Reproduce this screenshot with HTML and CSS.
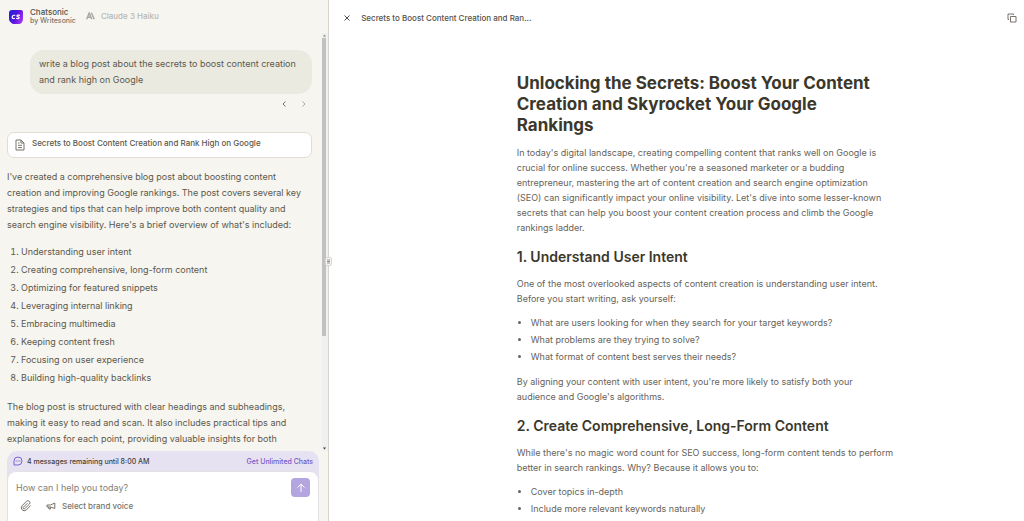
FILE: index.html
```
<!DOCTYPE html>
<html lang="en">
<head>
<meta charset="utf-8">
<meta name="viewport" content="width=device-width, initial-scale=1">
<title>Chatsonic</title>
<link rel="stylesheet" href="styles.css">
</head>
<body>
<div class="app">
  <aside class="chat">
    <header class="chat-header">
      <svg class="logo" viewBox="0 0 16 16" role="img" aria-label="Chatsonic logo">
        <defs>
          <linearGradient id="brand" x1="0" y1="0.2" x2="1" y2="0.7">
            <stop offset="0" stop-color="#2420d8"/><stop offset="0.55" stop-color="#5c16e0"/><stop offset="1" stop-color="#a838f0"/>
          </linearGradient>
        </defs>
        <path d="M4 1H13Q15 1 15 3V10Q15 12.500 13.500 14Q12.500 15 11 15H5.500Q4.500 15 3.500 14L2 12.500Q1 11.500 1 10V4Q1 1 4 1Z" fill="url(#brand)"/>
        <path d="M7.300 6.500Q4.500 5.600 4.200 8Q4.100 10.100 6.900 9.300M11.900 6.400Q9 5.700 8.900 7Q9 7.900 10.300 7.900Q11.600 8.400 10.900 9.200Q10 9.900 8.100 9.300" fill="none" stroke="#fff" stroke-width="1.200"/>
      </svg>
      <div class="brand">
        <span class="brand-name">Chatsonic</span>
        <span class="brand-by">by Writesonic</span>
      </div>
      <div class="model">
        <svg class="model-icon" viewBox="0 0 10 8" aria-hidden="true"><path d="M0.700 7.300L3.200 1L5.700 7.300M1.700 5.300H4.800M5.300 0.700L8.300 7.300" fill="none" stroke="currentColor" stroke-width="1.500"/></svg>
        <span>Claude 3 Haiku</span>
      </div>
    </header>

    <div class="thread-wrap">
      <main class="thread">
        <p class="prompt">write a blog post about the secrets to boost content creation and rank high on Google</p>
        <nav class="pager" aria-label="Prompt versions">
          <button class="icon-button" aria-label="Previous"><svg class="chevron" viewBox="0 0 6 8"><path d="M4.500 1.500L2 4L4.500 6.500"/></svg></button>
          <button class="icon-button next" aria-label="Next"><svg class="chevron" viewBox="0 0 6 8"><path d="M1.500 1.500L4 4L1.500 6.500"/></svg></button>
        </nav>
        <button class="artifact">
          <svg class="artifact-icon" viewBox="0 0 10 12" aria-hidden="true"><path d="M1 1H6L9 4V11H1ZM6 1V4H9M3 4H4.500M3 6.300H7M3 8.600H7"/></svg>
          <span>Secrets to Boost Content Creation and Rank High on Google</span>
        </button>
        <div class="answer">
          <p>I've created a comprehensive blog post about boosting content creation and improving Google rankings. The post covers several key strategies and tips that can help improve both content quality and search engine visibility. Here's a brief overview of what's included:</p>
          <ol>
            <li>Understanding user intent</li>
            <li>Creating comprehensive, long-form content</li>
            <li>Optimizing for featured snippets</li>
            <li>Leveraging internal linking</li>
            <li>Embracing multimedia</li>
            <li>Keeping content fresh</li>
            <li>Focusing on user experience</li>
            <li>Building high-quality backlinks</li>
          </ol>
          <p>The blog post is structured with clear headings and subheadings, making it easy to read and scan. It also includes practical tips and explanations for each point, providing valuable insights for both beginners and experienced content creators.</p>
        </div>
      </main>
      <div class="scrollbar" aria-hidden="true">
        <svg class="arrow" viewBox="0 0 5 5"><path d="M1 3.500L2.500 1.500L4 3.500Z"/></svg>
        <div class="track"><div class="thumb"></div></div>
        <svg class="arrow dark" viewBox="0 0 5 5"><path d="M1 1.500L2.500 3.500L4 1.500Z"/></svg>
      </div>
    </div>

    <footer class="composer">
      <div class="quota">
        <svg class="quota-icon" viewBox="0 0 10 10" aria-hidden="true"><path d="M1 9V5A4 4 0 1 1 5 9Z" fill="none" stroke="currentColor"/><path d="M2.700 5H3.700M4.500 5H5.500M6.300 5H7.300" stroke="currentColor" stroke-width="1.100"/></svg>
        <span>4 messages remaining until 8:00 AM</span>
        <a class="upgrade" href="#">Get Unlimited Chats</a>
      </div>
      <form class="entry">
        <div class="entry-row">
          <input class="message" type="text" placeholder="How can I help you today?" aria-label="Message">
          <button class="send" type="button" aria-label="Send"><svg viewBox="0 0 10 10"><path d="M5 9V1M1.500 4.500L5 1L8.500 4.500"/></svg></button>
        </div>
        <div class="tools">
          <button class="icon-button" type="button" aria-label="Attach file"><svg class="clip" viewBox="0 0 24 24"><path d="M21.400 11.100L12.200 20.200A6 6 0 0 1 3.800 11.800L13 2.600A4 4 0 0 1 18.700 8.300L9.400 17.400A2 2 0 0 1 6.600 14.600L15 6.200"/></svg></button>
          <button class="voice" type="button"><svg class="horn" viewBox="0 0 10 8" aria-hidden="true"><path d="M1 3H4.500L8.800 1V6.500L4.500 5H1ZM2.500 5L3 7H4.500V5.200"/></svg><span>Select brand voice</span></button>
        </div>
      </form>
    </footer>
    <button class="grip" aria-label="Resize panels"><svg viewBox="0 0 4 6"><path d="M0 1H4M0 3H4M0 5H4" stroke="#77736c"/></svg></button>
  </aside>

  <section class="viewer">
    <header class="viewer-header">
      <button class="icon-button" aria-label="Close"><svg class="close" viewBox="0 0 8 8"><path d="M1.500 1.500L6.500 6.500M6.500 1.500L1.500 6.500"/></svg></button>
      <span class="viewer-title">Secrets to Boost Content Creation and Ran...</span>
      <button class="icon-button copy-button" aria-label="Copy"><svg class="copy" viewBox="0 0 10 10"><path d="M3.500 3.500H9V9H3.500ZM2 6.500H1V1H6.500V2"/></svg></button>
    </header>
    <article class="document">
      <h1>Unlocking the Secrets: Boost Your Content Creation and Skyrocket Your Google Rankings</h1>
      <p>In today's digital landscape, creating compelling content that ranks well on Google is crucial for online success. Whether you're a seasoned marketer or a budding entrepreneur, mastering the art of content creation and search engine optimization (SEO) can significantly impact your online visibility. Let's dive into some lesser-known secrets that can help you boost your content creation process and climb the Google rankings ladder.</p>
      <h2>1. Understand User Intent</h2>
      <p>One of the most overlooked aspects of content creation is understanding user intent. Before you start writing, ask yourself:</p>
      <ul>
        <li>What are users looking for when they search for your target keywords?</li>
        <li>What problems are they trying to solve?</li>
        <li>What format of content best serves their needs?</li>
      </ul>
      <p>By aligning your content with user intent, you're more likely to satisfy both your audience and Google's algorithms.</p>
      <h2>2. Create Comprehensive, Long-Form Content</h2>
      <p>While there's no magic word count for SEO success, long-form content tends to perform better in search rankings. Why? Because it allows you to:</p>
      <ul>
        <li>Cover topics in-depth</li>
        <li>Include more relevant keywords naturally</li>
      </ul>
    </article>
  </section>
</div>
</body>
</html>
```
FILE: styles.css
```
* { box-sizing: border-box; }
body { margin: 0; font-family: Inter, "Liberation Sans", sans-serif; font-size: 9px; color: #5c584c; background: #fff; }
h1, h2, p, ul, ol { margin: 0; }
button, input { font: inherit; color: inherit; border: 0; background: none; padding: 0; }
svg { display: block; fill: none; stroke: currentColor; }
.app { display: grid; grid-template-columns: 9fr 19fr; height: 100vh; overflow: hidden; }

.chat { position: relative; display: flex; flex-direction: column; min-width: 0; min-height: 0; background: #f6f5f0; border-right: 1px solid #d5d4cb; }
.chat-header { display: flex; align-items: center; flex: none; height: 33px; padding: 0 8px; }
.logo { width: 16px; height: 16px; stroke: none; }
.brand { display: flex; flex-direction: column; margin-left: 6px; line-height: 8px; font-size: 7px; font-weight: 500; color: #7b776e; }
.brand-name { font-size: 8px; line-height: 9px; color: #55514a; }
.model { display: flex; align-items: center; gap: 5px; margin-left: 10px; padding-bottom: 2px; font-size: 8px; font-weight: 500; color: #b9b7b0; }
.model-icon { width: 10px; height: 8px; color: #aaa89f; }
.thread-wrap { display: flex; flex: 1; min-height: 0; }
.thread { flex: 1; min-width: 0; overflow: hidden; padding: 17px 10px 0 7px; }
.prompt { margin-left: 23px; padding: 6px 9px; border-radius: 14px; background: #ebeae0; line-height: 16px; color: #5c584c; }
.pager { display: flex; justify-content: flex-end; gap: 14px; padding: 6px 5px 0 0; color: #77736a; }
.icon-button { display: flex; flex: none; }
.chevron { width: 6px; height: 8px; }
.next { color: #aaa89f; }
.artifact { display: flex; align-items: center; gap: 7px; width: 100%; height: 26px; margin-top: 24px; padding: 0 7px; border: 1px solid #dfddd6; border-radius: 7px; background: #fff; font-size: 8px; font-weight: 500; color: #5c584c; }
.artifact-icon { width: 10px; height: 12px; color: #77736a; }
.artifact span { padding-bottom: 4px; }
.answer { padding-top: 11px; line-height: 16px; }
.answer ol { margin: 10px 0 12px; padding-left: 14px; }
.answer li { line-height: 18px; }
.scrollbar { display: flex; flex-direction: column; flex: none; width: 6px; background: #f0f0f0; }
.arrow { width: 5px; height: 5px; stroke: none; fill: #888; }
.dark { fill: #333; }
.track { flex: 1; }
.thumb { width: 4px; height: 73%; background: #c1c1c1; }
.composer { flex: none; margin: 0 9px 0 7px; border-radius: 10px 10px 0 0; background: #e7e2f1; }
.quota { display: flex; align-items: center; gap: 4px; height: 20px; padding: 0 6px; font-size: 7px; font-weight: 500; color: #423e38; }
.quota-icon { width: 10px; height: 10px; color: #7e64ce; }
.upgrade { margin-left: auto; color: #7558c8; text-decoration: none; }
.entry { height: 50px; padding: 6px 8px; border: 1px solid #e4e0e4; border-bottom: 0; border-radius: 9px 9px 0 0; background: #fff; }
.entry-row { display: flex; }
.message { flex: 1; min-width: 0; outline: 0; }
.message::placeholder { color: #817e77; opacity: 1; }
.send { display: grid; place-items: center; width: 19px; height: 19px; border-radius: 4px; background: #b3a5e0; color: #fff; }
.send svg { width: 10px; height: 10px; }
.tools { display: flex; align-items: center; gap: 14px; padding: 3px 4px 0; font-size: 8px; font-weight: 500; color: #77736a; }
.clip { width: 12px; height: 12px; stroke-width: 2; }
.voice { display: flex; align-items: center; gap: 6px; }
.horn { width: 10px; height: 8px; }
.grip { position: absolute; top: 50%; right: -4px; display: grid; place-items: center; width: 7px; height: 9px; margin-top: -4px; border: 1px solid #d8d6ce; border-radius: 2px; background: #f7f6f2; }
.grip svg { width: 3px; height: 5px; }

.viewer { min-width: 0; overflow: hidden; color: #67635a; }
.viewer-header { display: flex; align-items: center; height: 36px; padding: 0 7px 0 14px; font-size: 8px; font-weight: 500; color: #55514a; }
.close { width: 8px; height: 8px; }
.viewer-title { margin-left: 10px; }
.copy-button { margin-left: auto; color: #77736a; }
.copy { width: 10px; height: 10px; }
.document { max-width: 377px; margin-left: 27%; padding-top: 37px; line-height: 15px; }
.document h1 { margin-bottom: 9px; font-size: 17px; line-height: 21px; font-weight: 700; color: #3b382b; }
.document h2 { margin: 11px 0 8px; font-size: 14px; line-height: 22px; font-weight: 600; color: #3b382b; }
.document ul { margin: 8px 0 9px; padding-left: 14px; }
.document li { line-height: 17px; }
```
